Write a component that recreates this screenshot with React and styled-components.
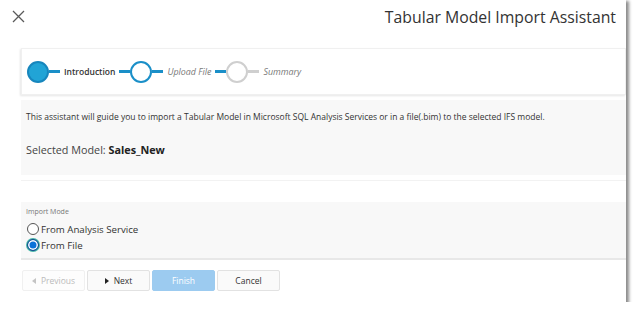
import React from 'react';
import styled, { createGlobalStyle } from 'styled-components';

const GlobalStyle = createGlobalStyle`
  body {
    margin: 0;
    background: #fff;
    font-family: 'Open Sans', 'Noto Sans', sans-serif;
  }
`;

const steps = [
  { label: 'Introduction', state: 'done' },
  { label: 'Upload File', state: 'next' },
  { label: 'Summary', state: 'todo' },
];

const App = () => {
  return (
    <>
      <GlobalStyle />
      <Dialog>
        <Header>
          <CloseButton aria-label='close'>
            <svg width='13' height='13' viewBox='0 0 13 13'>
              <path d='M1 1 L12 12 M12 1 L1 12' stroke='#5a5a5a' strokeWidth='1.3' />
            </svg>
          </CloseButton>
          <Title>Tabular Model Import Assistant</Title>
        </Header>

        <Body>
          <StepperCard>
            {steps.map((s, i) => (
              <Step key={s.label}>
                {i > 0 && <Line $color='#1a8fc8' />}
                <Circle $state={s.state} />
                <Line $color={s.state === 'todo' ? '#cfcfcf' : '#1a8fc8'} />
                <StepLabel $state={s.state}>{s.label}</StepLabel>
              </Step>
            ))}
          </StepperCard>

          <InfoPanel>
            <Intro>
              This assistant will guide you to import a Tabular Model in Microsoft SQL Analysis
              Services or in a file(.bim) to the selected IFS model.
            </Intro>
            <Selected>
              Selected Model: <strong>Sales_New</strong>
            </Selected>
          </InfoPanel>

          <ModeCard>
            <ModeHead />
            <ModeBody>
              <ModeLabel>Import Mode</ModeLabel>
              <RadioRow>
                <Radio />
                From Analysis Service
              </RadioRow>
              <RadioRow>
                <Radio $checked />
                From File
              </RadioRow>
            </ModeBody>
          </ModeCard>
        </Body>

        <Footer>
          <Button disabled>
            <Arrow $dir='left' $color='#c4c4c4' />
            Previous
          </Button>
          <Button>
            <Arrow $dir='right' $color='#222' />
            Next
          </Button>
          <Button $primary>Finish</Button>
          <Button>Cancel</Button>
        </Footer>
      </Dialog>
    </>
  );
};

const Dialog = styled.div`
  width: 626px;
  height: 302px;
  background: #fff;
  box-shadow: 2px 2px 3px 1px rgba(0, 0, 0, 0.45);
  display: flex;
  flex-direction: column;
`;

const Header = styled.div`
  height: 36px;
  display: flex;
  align-items: center;
  justify-content: space-between;
  padding: 0 10px 0 12px;
  box-sizing: border-box;
`;

const CloseButton = styled.div`
  width: 13px;
  height: 13px;
  margin-top: -3px;
  svg {
    display: block;
  }
`;

const Title = styled.div`
  font-size: 15.8px;
  color: #333;
  margin-top: -3px;
`;

const Body = styled.div`
  margin: 12px 0 0 21px;
  display: flex;
  flex-direction: column;
  gap: 5px;
`;

const StepperCard = styled.div`
  height: 47px;
  box-sizing: border-box;
  border: 1px solid #f0f0f0;
  box-shadow: -1px 1px 2px rgba(0, 0, 0, 0.1);
  display: flex;
  align-items: center;
  padding-left: 5px;
`;

const Step = styled.div`
  display: flex;
  align-items: center;
`;

const Line = styled.span`
  width: 11px;
  height: 3px;
  background: ${(p) => p.$color};
`;

const Circle = styled.span`
  width: 22px;
  height: 22px;
  box-sizing: border-box;
  border-radius: 50%;
  border: 2px solid
    ${(p) => (p.$state === 'todo' ? '#cfcfcf' : p.$state === 'done' ? '#1786bd' : '#1a8fc8')};
  background: ${(p) => (p.$state === 'done' ? '#21a4d6' : '#fff')};
`;

const StepLabel = styled.span`
  font-size: ${(p) => (p.$state === 'done' ? '8.5px' : '8.9px')};
  margin: 0 4px;
  color: ${(p) => (p.$state === 'done' ? '#333' : '#777')};
  font-weight: ${(p) => (p.$state === 'done' ? 600 : 400)};
  font-style: ${(p) => (p.$state === 'done' ? 'normal' : 'italic')};
`;

const InfoPanel = styled.div`
  height: 75px;
  background: #f8f8f8;
  padding: 11px 5px 0;
  box-sizing: border-box;
`;

const Intro = styled.div`
  font-size: 8.5px;
  color: #333;
  line-height: 12px;
`;

const Selected = styled.div`
  font-size: 10.8px;
  color: #444;
  margin-top: 19px;
  strong {
    color: #222;
    font-weight: 700;
  }
`;

const ModeCard = styled.div`
  display: flex;
  flex-direction: column;
  border-bottom: 2px solid #e8e8e8;
`;

const ModeHead = styled.div`
  height: 22px;
  background: #fff;
  border-top: 1px solid #f2f2f2;
  box-sizing: border-box;
`;

const ModeBody = styled.div`
  background: #f8f8f8;
  height: 56px;
  padding: 5px 5px 0;
  box-sizing: border-box;
`;

const ModeLabel = styled.div`
  font-size: 7px;
  color: #777;
  margin-bottom: 5px;
`;

const RadioRow = styled.div`
  display: flex;
  align-items: center;
  gap: 2px;
  font-size: 9.7px;
  color: #333;
  height: 16px;
  margin-left: 1px;
`;

const Radio = styled.span`
  width: 12px;
  height: 12px;
  box-sizing: border-box;
  border-radius: 50%;
  border: 1px solid ${(p) => (p.$checked ? '#1b4f8a' : '#555')};
  background: ${(p) => (p.$checked ? '#0b72d8' : '#fff')};
  box-shadow: ${(p) =>
    p.$checked ? 'inset 0 0 0 1.5px #fff, 0 0 0 1px #45b5a8' : 'none'};
`;

const Footer = styled.div`
  display: flex;
  gap: 2px;
  margin: 10px 0 0 22px;
`;

const Button = styled.div`
  width: 63px;
  height: 21px;
  box-sizing: border-box;
  display: flex;
  align-items: center;
  justify-content: center;
  gap: 5px;
  font-size: 8.5px;
  border: 1px solid ${(p) => (p.$primary ? '#9ccbf0' : p.disabled ? '#f0f0f0' : '#e2e2e2')};
  background: ${(p) => (p.$primary ? '#9ccbf0' : p.disabled ? '#fdfdfd' : '#fafafa')};
  color: ${(p) => (p.$primary ? '#fff' : p.disabled ? '#bbb' : '#333')};
  border-radius: 2px;
`;

const Arrow = styled.span`
  width: 0;
  height: 0;
  border-top: 3.5px solid transparent;
  border-bottom: 3.5px solid transparent;
  ${(p) =>
    p.$dir === 'left'
      ? `border-right: 4px solid ${p.$color};`
      : `border-left: 4px solid ${p.$color};`}
`;

export default App;
